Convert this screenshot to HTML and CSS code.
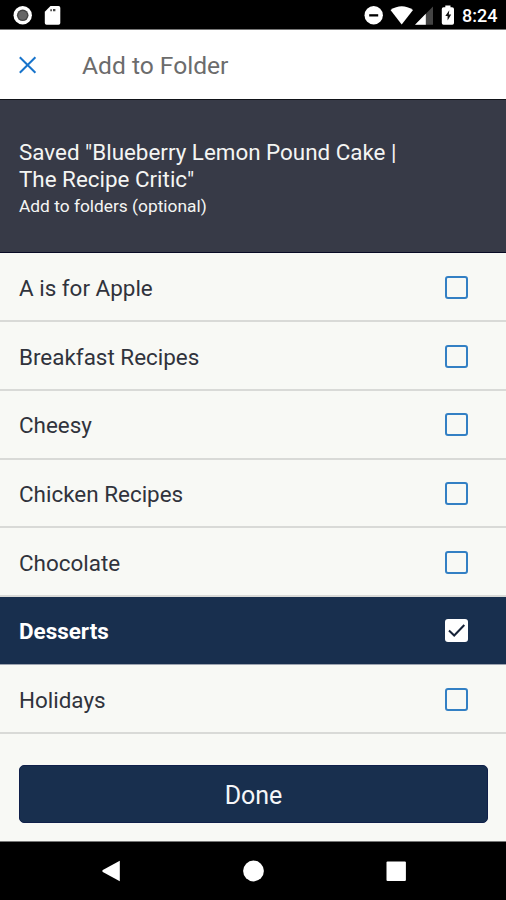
FILE: index.html
```html
<!DOCTYPE html>
<html lang="en">
<head>
<meta charset="utf-8">
<title>Add to Folder</title>
<link rel="stylesheet" href="styles.css">
</head>
<body>
<div class="screen">
  <div class="status">
    <svg class="status-left" width="70" height="30" viewBox="0 0 70 30">
      <circle cx="22.7" cy="15.3" r="9.2" fill="#fff"/>
      <circle cx="22.7" cy="15.3" r="5.8" fill="#444"/>
      <circle cx="22.7" cy="15.3" r="4.4" fill="#666"/>
      <path d="M50.5 6H58.5Q60.3 6 60.3 7.8V23Q60.3 24.8 58.5 24.8H46.6Q44.8 24.8 44.8 23V11.7Z" fill="#fff"/>
      <path d="M50.3 9.3h1.6v2h-1.6zM53 9h2.4v2.2H53z" fill="#444"/>
    </svg>
    <svg class="status-right" width="95" height="30" viewBox="0 0 95 30">
      <circle cx="6.7" cy="15.3" r="9.2" fill="#fff"/>
      <path d="M2.2 14.2h9v2.3h-9z" fill="#000"/>
      <path d="M23.5 10Q34.7 2.5 46 10L34.7 24.5Z" fill="#fff"/>
      <path d="M48 24.7L66 6.5V24.7Z" fill="#444"/>
      <path d="M48 24.7L58.8 13.8V24.7Z" fill="#fff"/>
      <path d="M76 7.3H78.3V5.5H83.5V7.3H85Q87 7.3 87 9V23Q87 24.8 85.3 24.8H76.5Q74.8 24.8 74.8 23V9Q74.8 7.3 76.5 7.3Z" fill="#fff"/>
      <path d="M82.3 10.3L78.3 15.9H80.6V20.6L84.2 14.4H81.8Z" fill="#111"/>
    </svg>
    <span class="clock">8:24</span>
  </div>
  <header class="toolbar">
    <svg class="close" width="18" height="18" viewBox="0 0 18 18"><path d="M0.8 1.2L16.4 16.8M16.4 1.2L0.8 16.8" stroke="#1874cb" stroke-width="2" fill="none"/></svg>
    <h1>Add to Folder</h1>
  </header>
  <section class="saved">
    <p class="saved-title">Saved "Blueberry Lemon Pound Cake |<br>The Recipe Critic"</p>
    <p class="saved-hint">Add to folders (optional)</p>
  </section>
  <ul class="folders">
    <li><span>A is for Apple</span><i class="box"></i></li>
    <li><span>Breakfast Recipes</span><i class="box"></i></li>
    <li><span>Cheesy</span><i class="box"></i></li>
    <li><span>Chicken Recipes</span><i class="box"></i></li>
    <li><span>Chocolate</span><i class="box"></i></li>
    <li class="selected"><span>Desserts</span><i class="box"><svg width="23" height="23" viewBox="0 0 23 23"><path d="M4 11.5L9.2 16.5L19.3 6" stroke="#172338" stroke-width="2" fill="none"/></svg></i></li>
    <li><span>Holidays</span><i class="box"></i></li>
  </ul>
  <div class="footer"><button class="done">Done</button></div>
  <nav class="nav">
    <svg width="506" height="58" viewBox="0 0 506 58" fill="#fff">
      <path d="M119.8 18.7V39.3L102.8 30Q101.6 29 102.8 28Z"/>
      <circle cx="253.5" cy="29" r="10.4"/>
      <rect x="386.5" y="19.6" width="19.4" height="19.4" rx="1"/>
    </svg>
  </nav>
</div>
</body>
</html>
```
FILE: styles.css
```css
* { box-sizing: border-box; }
body, h1, p, ul { margin: 0; padding: 0; }
body { font-family: Roboto, sans-serif; background: #f8f9f5; }
.screen { width: 506px; height: 900px; display: flex; flex-direction: column; overflow: hidden; }
.status { height: 30px; flex: none; background: #000; display: flex; align-items: center; border-bottom: 1px solid #777; }
.status svg { flex: none; }
.status-right { margin-left: 297px; overflow: visible; }
.clock { color: #fff; font-size: 18px; font-weight: 500; line-height: 30px; padding-top: 3px; }
.toolbar { height: 70px; flex: none; background: #fff; display: flex; align-items: center; padding-left: 19px; gap: 45px; border-bottom: 1px solid #111318; }
.toolbar h1 { font-size: 24.6px; font-weight: 400; color: #6c6c6c; line-height: 30px; padding-top: 2px; }
.saved { height: 153px; flex: none; background: #373a47; color: #f4f5f3; padding: 39px 19px 0; border-bottom: 1px solid #080a24; }
.saved-title { font-size: 22.4px; line-height: 26.5px; white-space: nowrap; }
.saved-hint { font-size: 17.35px; line-height: 24px; padding-top: 2px; }
.folders { list-style: none; height: 482px; flex: none; display: grid; grid-template-rows: repeat(7, 68.7px); padding-top: 0.6px; }
.folders li { display: flex; align-items: center; justify-content: space-between; padding: 1px 38px 0 19px; border-bottom: 2px solid #d9dad7; font-size: 22.45px; color: #30333c; }
.folders span { padding-top: 1px; }
.box { width: 23px; height: 23px; border: 2px solid #3380c4; border-radius: 3px; display: block; }
.folders .selected { background: #182f4e; color: #fff; font-weight: 700; border-bottom-color: #9da4b0; border-bottom-width: 1px; margin-bottom: 1px; }
.selected .box { background: #fff; border: 0; }
.selected svg { display: block; }
.footer { height: 107px; flex: none; padding: 30px 18px 0 19px; border-bottom: 1px solid #777; }
.done { display: block; width: 100%; height: 58px; border: 1px solid #10204a; border-radius: 5px; background: #182f4e; color: #f5f6f8; font: 400 25px Roboto, sans-serif; padding: 2px 0 0; }
.nav { height: 58px; flex: none; background: #000; }
.nav svg { display: block; }
```
